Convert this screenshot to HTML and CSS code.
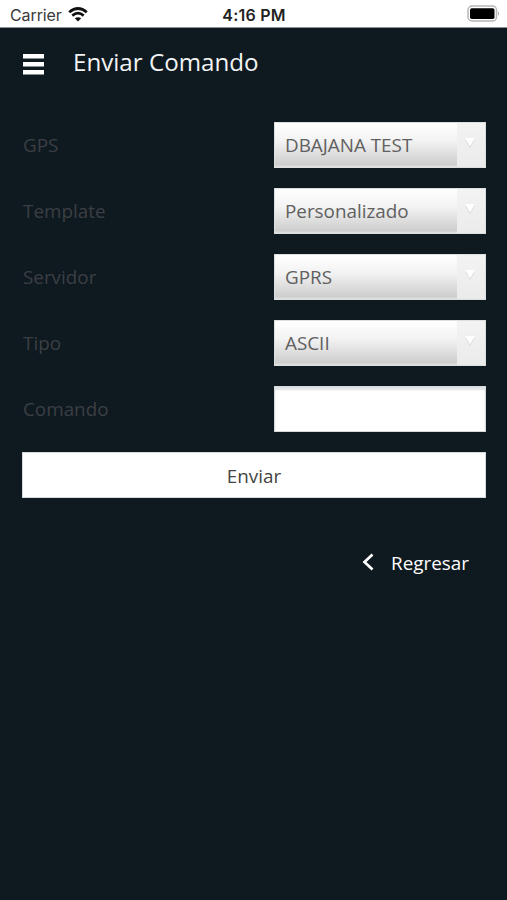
FILE: index.html
```html
<!DOCTYPE html>
<html lang="es">
<head>
<meta charset="utf-8">
<meta name="viewport" content="width=device-width, initial-scale=1">
<title>Enviar Comando</title>
<link rel="stylesheet" href="styles.css">
</head>
<body>
<div class="status">
  <div class="carrier"><span class="carrier-name">Carrier</span>
    <svg class="wifi" viewBox="0 0 20 15" width="20" height="15" fill="none" stroke="#111" stroke-width="2.7">
      <path d="M1.2 5.2Q10-2.2 18.8 5.2"/><path d="M4.3 8.6Q10 3.8 15.7 8.6"/><path d="M10 14.5L6.8 11.3Q10 9 13.2 11.3Z" fill="#111" stroke="none"/>
    </svg>
  </div>
  <time class="clock">4:16 PM</time>
  <svg class="battery" viewBox="0 0 34 18" width="34" height="18">
    <rect x="1" y="1" width="28.5" height="15" rx="4" fill="#fff" stroke="#b5b5b5" stroke-width="1.5"/>
    <rect x="3" y="3.2" width="24.5" height="10.8" rx="1.8" fill="#000"/>
    <path d="M31 6Q33 8.5 31 11Z" fill="#aaa"/>
  </svg>
</div>
<header class="bar">
  <svg class="menu" viewBox="0 0 21 21" width="21" height="21" fill="#fff"><path d="M0 0H21V4.5H0ZM0 8H21V12.5H0ZM0 16H21V20.5H0Z"/></svg>
  <h1 class="title">Enviar Comando</h1>
</header>
<main class="form">
  <div class="row"><span class="label">GPS</span><div class="select"><span class="value">DBAJANA TEST</span><span class="arrow"><svg viewBox="0 0 12 12" width="12" height="12"><path d="M1 2.5H11L6 11Z" fill="#d8d8d8"/><path d="M1 1H11L6 9.5Z" fill="#fff"/></svg></span></div></div>
  <div class="row"><span class="label">Template</span><div class="select"><span class="value">Personalizado</span><span class="arrow"><svg viewBox="0 0 12 12" width="12" height="12"><path d="M1 2.5H11L6 11Z" fill="#d8d8d8"/><path d="M1 1H11L6 9.5Z" fill="#fff"/></svg></span></div></div>
  <div class="row"><span class="label">Servidor</span><div class="select"><span class="value">GPRS</span><span class="arrow"><svg viewBox="0 0 12 12" width="12" height="12"><path d="M1 2.5H11L6 11Z" fill="#d8d8d8"/><path d="M1 1H11L6 9.5Z" fill="#fff"/></svg></span></div></div>
  <div class="row"><span class="label">Tipo</span><div class="select"><span class="value">ASCII</span><span class="arrow"><svg viewBox="0 0 12 12" width="12" height="12"><path d="M1 2.5H11L6 11Z" fill="#d8d8d8"/><path d="M1 1H11L6 9.5Z" fill="#fff"/></svg></span></div></div>
  <div class="row"><label class="label" for="cmd">Comando</label><input class="input" id="cmd" type="text"></div>
  <button class="send" type="button">Enviar</button>
  <a class="back"><svg viewBox="0 0 12 18" width="12" height="18" fill="none" stroke="#fff" stroke-width="2.7"><path d="M10.5 1.5L2.5 9L10.5 16.5"/></svg><span>Regresar</span></a>
</main>
</body>
</html>
```
FILE: styles.css
```css
* { box-sizing: border-box; }
body {
  margin: 0;
  min-height: 900px;
  background: #0f1920;
  color: #fff;
  font: 18.85px/26px "Open Sans", sans-serif;
}
.status {
  display: grid;
  grid-template-columns: 1fr auto 1fr;
  align-items: center;
  height: 28px;
  padding: 0 6px 0 10px;
  background: #fff;
  border-bottom: 1px solid #8b9094;
  color: #3a3a3a;
  font: 16px/20px Inter, sans-serif;
}
.carrier { display: flex; align-items: center; gap: 6px; padding-top: 2px; }
.carrier-name { letter-spacing: -0.1px; }
.clock { margin-left: -3px; padding-top: 2px; color: #222; font-weight: 600; letter-spacing: 0.2px; }
.battery { justify-self: end; }
.bar {
  display: flex;
  align-items: center;
  gap: 29px;
  height: 72px;
  padding: 0 23px;
}
.title { margin: -5px 0 0; font-size: 24.15px; line-height: 34px; font-weight: 400; color: #f2f4f5; }
.form {
  display: flex;
  flex-direction: column;
  gap: 20px;
  padding: 22px 21px 0 22px;
}
.row { display: flex; justify-content: space-between; align-items: center; height: 46px; }
.label { padding-left: 1px; color: #3b3f43; }
.select {
  display: flex;
  width: 212px;
  height: 46px;
  border: 1px solid #dcdfe0;
  background: linear-gradient(#fff 0%, #f3f3f3 40%, #cecece 95%, #e2e2e2 100%);
}
.value { flex: 1; padding: 9px 0 0 10px; color: #606060; }
.arrow { width: 28px; padding: 14px 0 0 7px; background: linear-gradient(#f3f3f3, #ebebeb); line-height: 0; }
.input {
  width: 212px;
  height: 46px;
  padding: 0 10px;
  border: 1px solid #d5d9dc;
  border-radius: 0;
  background: #fff;
  box-shadow: inset 0 3px 2px #dfe3e3;
  font: inherit;
  outline: none;
}
.send {
  height: 46px;
  padding: 2px 0 0;
  border: 1px solid #d5d9dc;
  background: #fff;
  color: #444;
  font: inherit;
}
.back {
  display: flex;
  align-items: center;
  align-self: flex-end;
  gap: 17px;
  margin: 32px 17px 0 0;
  color: #fff;
}
.back svg { margin-top: -2px; }
```
